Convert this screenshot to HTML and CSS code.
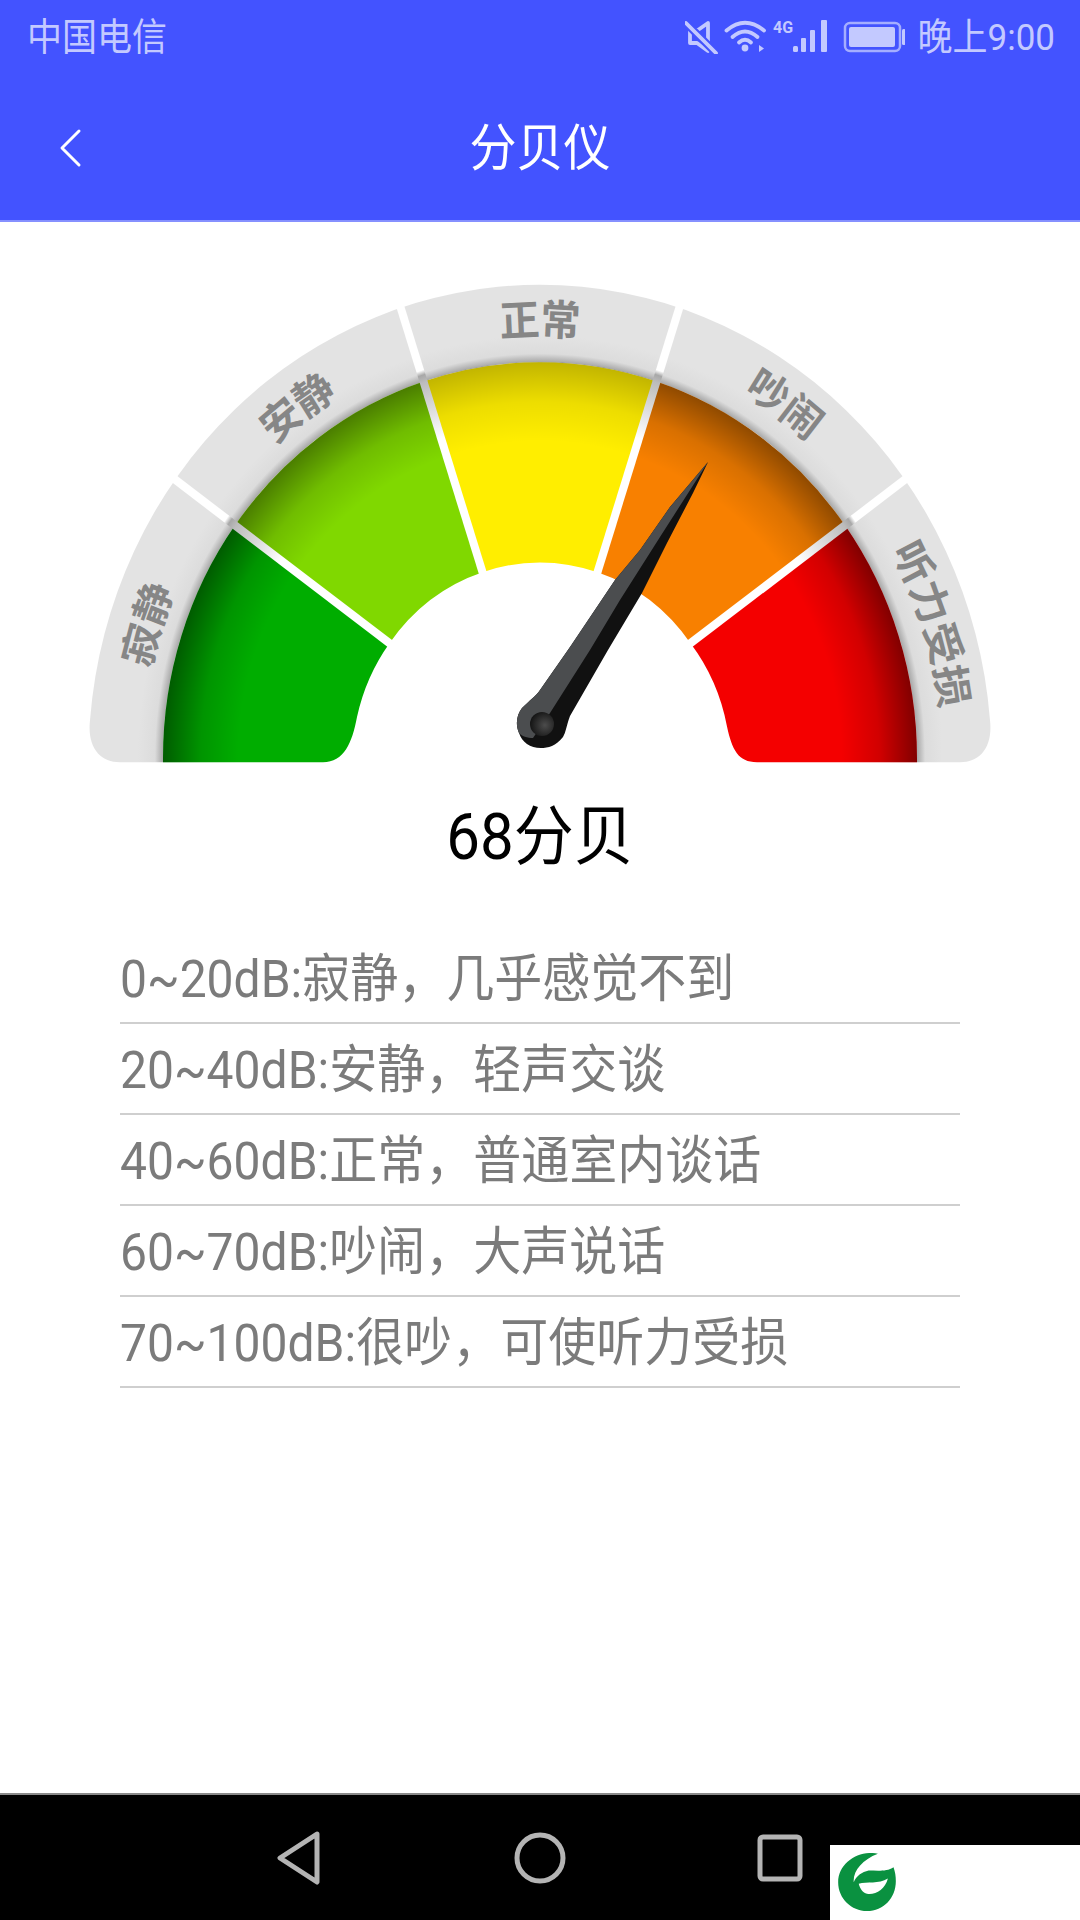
FILE: index.html
```html
<!DOCTYPE html>
<html lang="zh-CN">
<head>
<meta charset="utf-8">
<title>分贝仪</title>
<link rel="stylesheet" href="styles.css">
</head>
<body>
<div class="page">
  <header class="appbar">
    <div class="status">
      <span class="carrier tall">中国电信</span>
      <div class="status-right">
        <svg class="status-icons" width="220" height="38" viewBox="0 -4 220 38">
          <path class="si-line" d="M23 3 L13 10 H5 V23 H12 L23 31 Z"/>
          <path class="si-cut" d="M1 3 L31 33"/>
          <path class="si-line" d="M1 3 L31 33"/>
          <path class="si-line" d="M41.5 10.5 Q60 -5 79 10.5"/>
          <path class="si-line" d="M47.5 17 Q60 6 72.5 17"/>
          <path class="si-line" d="M54 22.5 Q60 17 66 22.5"/>
          <circle class="si-fill" cx="60" cy="28" r="3.4"/>
          <path class="si-fill" d="M74 25 L79 28.5 L74 32 Z"/>
          <text class="si-4g" x="88" y="13">4G</text>
          <rect class="si-fill" x="108" y="26" width="5" height="6" rx="1.5"/>
          <rect class="si-fill" x="116" y="18" width="5" height="14" rx="1"/>
          <rect class="si-fill" x="125" y="10" width="5" height="22" rx="1"/>
          <rect class="si-fill" x="136" y="0" width="6" height="32" rx="1"/>
          <rect class="si-batt" x="160" y="3" width="55" height="28" rx="5"/>
          <rect class="si-fill" x="164" y="7" width="46" height="20" rx="2"/>
          <rect class="si-fill" x="217" y="9" width="3.5" height="16" rx="1.5"/>
        </svg>
        <span class="clock tall">晚上9:00</span>
      </div>
    </div>
    <div class="toolbar">
      <svg class="back" width="24" height="40" viewBox="0 0 24 40"><path d="M21 3 L4 20 L21 37"/></svg>
      <h1 class="title tall">分贝仪</h1>
    </div>
  </header>

  <main class="content">
    <svg class="gauge" width="1080" height="542" viewBox="0 222 1080 542">
      <defs>
        <radialGradient id="rimGrad" gradientUnits="userSpaceOnUse" cx="0" cy="0" r="452">
          <stop offset="0.833" stop-color="#a4a4a4"/>
          <stop offset="0.852" stop-color="#dcdcdc"/>
          <stop offset="0.89" stop-color="#e3e3e3"/>
        </radialGradient>
        <radialGradient id="shadeGrad" gradientUnits="userSpaceOnUse" cx="0" cy="0" r="377">
          <stop offset="0.8" stop-color="#000" stop-opacity="0"/>
          <stop offset="0.9" stop-color="#000" stop-opacity="0.3"/>
          <stop offset="1" stop-color="#000" stop-opacity="1"/>
        </radialGradient>
        <radialGradient id="divGrad" gradientUnits="userSpaceOnUse" cx="0" cy="0" r="470">
          <stop offset="0.68" stop-color="#fff"/>
          <stop offset="0.8" stop-color="#bcbcbc"/>
          <stop offset="0.815" stop-color="#a8a8a8"/>
          <stop offset="0.825" stop-color="#fff"/>
        </radialGradient>
        <radialGradient id="hubGrad" cx="0.62" cy="0.55" r="0.62">
          <stop offset="0" stop-color="#4c4c4c"/>
          <stop offset="1" stop-color="#141414"/>
        </radialGradient>
        <path id="labelArc" d="M-403 0 A403 403 0 0 1 403 0"/>
      </defs>
      <g transform="translate(540 758) scale(1 1.05)">
        <path class="rim" d="M-420 4 C-440 4 -453 -10 -450 -36 A451.5 451.5 0 0 1 450 -36 C453 -10 440 4 420 4 L377 4 L377 0 A377 377 0 0 0 -377 0 L-377 4 Z"/>

        <path class="sec-green" d="M-377 4 L-377 0 A377 377 0 0 1 -305 -221.6 L-150.5 -109.3 A186 186 0 0 0 -183 -39 C-188 -14 -196 4 -217 4 Z"/>
        <path class="sec-lime" d="M-305 -221.6 A377 377 0 0 1 -116.5 -358.5 L-57.5 -176.9 A186 186 0 0 0 -150.5 -109.3 Z"/>
        <path class="sec-yellow" d="M-116.5 -358.5 A377 377 0 0 1 116.5 -358.5 L57.5 -176.9 A186 186 0 0 0 -57.5 -176.9 Z"/>
        <path class="sec-orange" d="M116.5 -358.5 A377 377 0 0 1 305 -221.6 L150.5 -109.3 A186 186 0 0 0 57.5 -176.9 Z"/>
        <path class="sec-red" d="M305 -221.6 A377 377 0 0 1 377 0 L377 4 L217 4 C198 4 192 -8 187 -30 A186 186 0 0 0 150.5 -109.3 Z"/>

        <path class="shade shade-a" d="M-338 4 L-338 0 A338 338 0 0 1 -273.4 -198.7"/>
        <path class="shade shade-b" d="M-273.4 -198.7 A338 338 0 0 1 -104.4 -321.5"/>
        <path class="shade shade-c" d="M-104.4 -321.5 A338 338 0 0 1 104.4 -321.5"/>
        <path class="shade shade-b" d="M104.4 -321.5 A338 338 0 0 1 273.4 -198.7"/>
        <path class="shade shade-a" d="M273.4 -198.7 A338 338 0 0 1 338 0 L338 4"/>

        <path class="divider" d="M-146 -106 L-373 -271"/>
        <path class="divider" d="M-55.6 -171.2 L-142.5 -438.5"/>
        <path class="divider" d="M55.6 -171.2 L142.5 -438.5"/>
        <path class="divider" d="M146 -106 L373 -271"/>

        <text class="gauge-label" dy="4"><textPath href="#labelArc" startOffset="10%">寂静</textPath></text>
        <text class="gauge-label" dy="4"><textPath href="#labelArc" startOffset="30%">安静</textPath></text>
        <text class="gauge-label"><textPath href="#labelArc" startOffset="50%">正常</textPath></text>
        <text class="gauge-label"><textPath href="#labelArc" startOffset="70%">吵闹</textPath></text>
        <text class="gauge-label"><textPath href="#labelArc" startOffset="90%">听力受损</textPath></text>
      </g>
      <path class="needle-dark" d="M708 462 L693 493 L667 543 L642 593 L608 650 L570 716 C566 727 566 732 563 737 C556 746 548 748 541 748 C530 748 522 742 519 733 C515 724 517 714 522 708 C530 700 536 696 540 690 L570 647 L615 580 L640 550 L670 507 Z"/>
      <path class="needle-light" d="M708 462 L670 507 L640 550 L615 580 L570 647 L540 690 C536 696 530 700 522 708 C517 714 515 724 519 733 C521 736 528 738 533 738 L550 713 L590 650 L620 600 L660 537 Z"/>
      <circle class="hub" cx="542" cy="724" r="12"/>
    </svg>

    <div class="reading"><span class="tall">68分贝</span></div>

    <ul class="levels">
      <li class="level"><span class="tall">0~20dB:寂静，几乎感觉不到</span></li>
      <li class="level"><span class="tall">20~40dB:安静，轻声交谈</span></li>
      <li class="level"><span class="tall">40~60dB:正常，普通室内谈话</span></li>
      <li class="level"><span class="tall">60~70dB:吵闹，大声说话</span></li>
      <li class="level"><span class="tall">70~100dB:很吵，可使听力受损</span></li>
    </ul>
  </main>

  <nav class="navbar">
    <svg class="nav-icon" width="46" height="54" viewBox="0 0 46 54"><path d="M41 3 L4 27 L41 51 Z"/></svg>
    <svg class="nav-icon" width="54" height="54" viewBox="0 0 54 54"><circle cx="27" cy="27" r="23"/></svg>
    <svg class="nav-icon" width="46" height="48" viewBox="0 0 46 48"><rect x="3" y="3" width="40" height="42" rx="3"/></svg>
  </nav>

  <div class="watermark">
    <svg class="logo" width="58" height="58" viewBox="18 15 174 175">
      <path class="logo-green" d="M138 17 C80 5 18 45 18 103 C18 152 58 190 105 190 C155 190 192 150 192 100 C192 85 190 72 185 58 C165 72 135 68 110 68 C90 72 72 85 65 103 C62 70 90 35 138 17 Z"/>
      <path class="logo-white" d="M80 108 C105 100 140 110 168 92 C160 125 130 142 105 138 C92 136 84 122 80 108 Z"/>
    </svg>
  </div>
</div>
</body>
</html>
```

FILE: styles.css
```css
* { box-sizing: border-box; }
html, body { margin: 0; padding: 0; }
body { font-family: Roboto, "Noto Sans CJK SC", sans-serif; background: #fff; }

.page {
  position: relative;
  width: 1080px;
  height: 1920px;
  display: flex;
  flex-direction: column;
  overflow: hidden;
}

.tall { display: inline-block; transform: scaleY(1.08); }

.appbar {
  height: 222px;
  background: #4353ff;
  border-bottom: 2px solid #8690ff;
  display: flex;
  flex-direction: column;
}

.status {
  height: 74px;
  padding: 2px 25px 0 27px;
  display: flex;
  align-items: center;
  justify-content: space-between;
  color: #c3c9ff;
  font-size: 35px;
}
.carrier { line-height: 72px; }
.status-right { display: flex; align-items: center; gap: 13px; }
.status-icons { display: block; margin-top: -6px; }
.clock { line-height: 72px; font-size: 35px; }

.si-line { fill: none; stroke: #c3c9ff; stroke-width: 3.8; stroke-linecap: round; stroke-linejoin: round; }
.si-cut { fill: none; stroke: #4353ff; stroke-width: 8; }
.si-fill { fill: #c3c9ff; }
.si-batt { fill: none; stroke: #a5aeff; stroke-width: 2.5; }
.si-4g { fill: #c3c9ff; font-size: 16px; font-weight: 700; }

.toolbar {
  flex: 1;
  position: relative;
  display: flex;
  align-items: center;
  justify-content: center;
  padding-top: 4px;
}
.back { position: absolute; left: 58px; top: 54px; }
.back path { fill: none; stroke: #fff; stroke-width: 3; stroke-linecap: round; stroke-linejoin: round; }
.title { margin: 0; color: #fff; font-size: 47px; font-weight: 400; line-height: 60px; }

.content { flex: 1; display: flex; flex-direction: column; align-items: center; }
.gauge { display: block; flex: none; }

.rim { fill: url(#rimGrad); }
.sec-green { fill: #00ad00; }
.sec-lime { fill: #80d800; }
.sec-yellow { fill: #ffee00; }
.sec-orange { fill: #f88000; }
.sec-red { fill: #f40000; }
.shade { fill: none; stroke: url(#shadeGrad); stroke-width: 78; }
.shade-a { stroke-opacity: 0.47; }
.shade-b { stroke-opacity: 0.42; }
.shade-c { stroke-opacity: 0.24; }
.divider { fill: none; stroke: url(#divGrad); stroke-width: 8; }
.gauge-label {
  fill: #868686;
  font-family: "Noto Sans CJK SC", sans-serif;
  font-size: 40px;
  font-weight: 700;
  text-anchor: middle;
}
.needle-dark { fill: #111; }
.needle-light { fill: #4b4d4f; }
.hub { fill: url(#hubGrad); }

.reading {
  margin-top: 31px;
  color: #000;
  font-size: 60px;
  line-height: 84px;
  height: 84px;
}

.levels {
  list-style: none;
  margin: 54px 0 0;
  padding: 0;
  width: 840px;
}
.level {
  height: 91px;
  padding-top: 5px;
  line-height: 84px;
  font-size: 48px;
  color: #7b7b7b;
  border-bottom: 2px solid #cfcfcf;
  white-space: nowrap;
}

.navbar {
  height: 127px;
  background: #000;
  border-top: 2px solid #8a8a8a;
  display: flex;
  align-items: center;
  justify-content: space-between;
  padding: 0 277px 0 276px;
}
.nav-icon { display: block; }
.nav-icon path, .nav-icon circle, .nav-icon rect {
  fill: none;
  stroke: #b4b4b4;
  stroke-width: 5;
  stroke-linejoin: round;
}

.watermark {
  position: absolute;
  left: 830px;
  top: 1845px;
  width: 250px;
  height: 75px;
  background: #fff;
  padding: 8px 0 0 8px;
}
.logo { display: block; }
.logo-green { fill: #0a9140; }
.logo-white { fill: #fff; }
```
